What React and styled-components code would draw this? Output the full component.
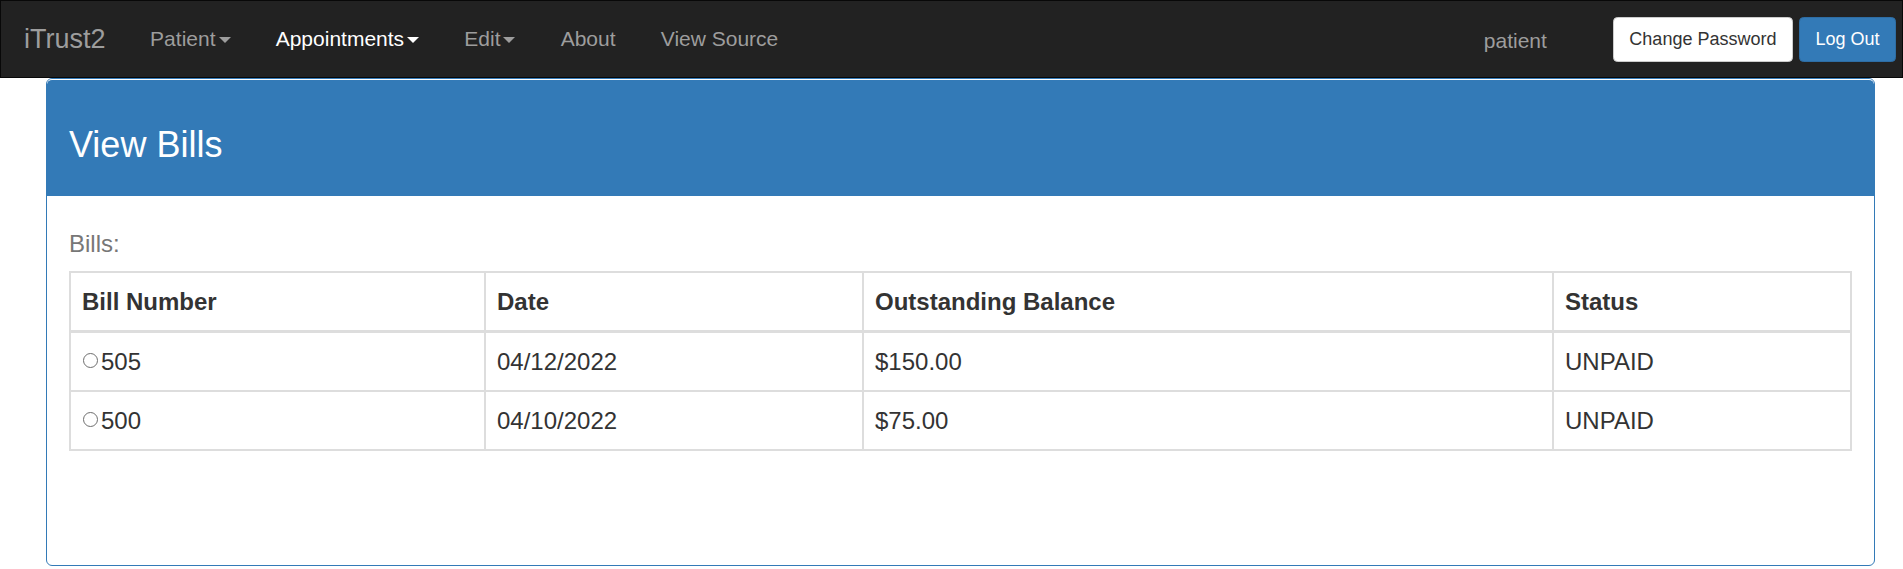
import React from "react";
import styled, { createGlobalStyle } from "styled-components";

const GlobalStyle = createGlobalStyle`
  html, body {
    margin: 0;
    padding: 0;
    background: #fff;
  }
  body {
    font-family: "Liberation Sans", Arial, Helvetica, sans-serif;
    color: #333;
  }
  *, *::before, *::after {
    box-sizing: border-box;
  }
`;

const Navbar = styled.nav`
  display: flex;
  align-items: center;
  height: 78px;
  background: #222;
  border: 1px solid #080808;
  padding-right: 6px;
`;

const Brand = styled.a`
  padding: 0 22px 0 23px;
  font-size: 27px;
  line-height: 30px;
  color: #9d9d9d;
  text-decoration: none;
  white-space: nowrap;
`;

const NavList = styled.ul`
  display: flex;
  align-items: center;
  margin: 0;
  padding: 0;
  list-style: none;
`;

const NavLink = styled.a`
  display: block;
  padding: 0 22.6px;
  font-size: 21px;
  line-height: 30px;
  color: ${(p) => (p.$active ? "#fff" : "#9d9d9d")};
  text-decoration: none;
  white-space: nowrap;
`;

const Caret = styled.span`
  display: inline-block;
  width: 0;
  height: 0;
  margin-left: 3px;
  vertical-align: middle;
  border-top: 6px solid currentColor;
  border-left: 6px solid transparent;
  border-right: 6px solid transparent;
`;

const Spacer = styled.div`
  flex: 1;
`;

const NavText = styled.span`
  align-self: flex-start;
  margin-top: 25px;
  margin-right: 66px;
  font-size: 21px;
  line-height: 30px;
  color: #9d9d9d;
`;

const ButtonGroup = styled.div`
  display: flex;
  gap: 6px;
`;

const NavButton = styled.button`
  display: inline-flex;
  align-items: center;
  height: 45px;
  padding: 0 15.5px;
  font-family: inherit;
  font-size: 18px;
  line-height: 27px;
  border-radius: 4.5px;
  border: 1px solid ${(p) => (p.$primary ? "#2e6da4" : "#ccc")};
  background: ${(p) => (p.$primary ? "#337ab7" : "#fff")};
  color: ${(p) => (p.$primary ? "#fff" : "#333")};
  cursor: pointer;
`;

const Panel = styled.section`
  margin: 0 28px 0 46px;
  border: 1px solid #337ab7;
  border-radius: 6px;
  background: #fff;
  overflow: hidden;
`;

const PanelHeading = styled.div`
  background: #337ab7;
  border-top: 1px solid #fff;
  border-radius: 5px 5px 0 0;
  padding: 45px 22px 31px;
`;

const PanelTitle = styled.h3`
  margin: 0;
  font-size: 36px;
  line-height: 40px;
  font-weight: 400;
  color: #fff;
`;

const PanelBody = styled.div`
  padding: 31px 22px 114px;
`;

const FieldLabel = styled.div`
  font-size: 24px;
  line-height: 34px;
  color: #777;
  margin-bottom: 10px;
`;

const Table = styled.table`
  width: 100%;
  table-layout: fixed;
  border-collapse: separate;
  border-spacing: 0;
  border-top: 2px solid #ddd;
  border-left: 2px solid #ddd;
  font-size: 24px;
  line-height: 34px;
  color: #333;
`;

const Th = styled.th`
  width: ${(p) => (p.$w ? `${p.$w}px` : "auto")};
  text-align: left;
  font-weight: 700;
  padding: 12px 11px 11px;
  border-right: 2px solid #ddd;
  border-bottom: 3px solid #ddd;
`;

const Td = styled.td`
  padding: 12px 11px 11px;
  border-right: 2px solid #ddd;
  border-bottom: 2px solid #ddd;
  white-space: nowrap;
`;

const Radio = styled.input`
  appearance: none;
  -webkit-appearance: none;
  display: inline-block;
  width: 15px;
  height: 15px;
  margin: 0 3px 0 1px;
  border: 1px solid #6e6e6e;
  border-radius: 50%;
  background: #fff;
  vertical-align: 2px;
`;

const navItems = [
  { label: "Patient", caret: true },
  { label: "Appointments", caret: true, active: true },
  { label: "Edit", caret: true },
  { label: "About" },
  { label: "View Source" },
];

const bills = [
  { id: "505", date: "04/12/2022", balance: "$150.00", status: "UNPAID" },
  { id: "500", date: "04/10/2022", balance: "$75.00", status: "UNPAID" },
];

export default function App() {
  return (
    <>
      <GlobalStyle />
      <Navbar>
        <Brand href="#">iTrust2</Brand>
        <NavList>
          {navItems.map((item) => (
            <li key={item.label}>
              <NavLink href="#" $active={item.active}>
                {item.label}
                {item.caret && <Caret />}
              </NavLink>
            </li>
          ))}
        </NavList>
        <Spacer />
        <NavText>patient</NavText>
        <ButtonGroup>
          <NavButton>Change Password</NavButton>
          <NavButton $primary>Log Out</NavButton>
        </ButtonGroup>
      </Navbar>
      <Panel>
        <PanelHeading>
          <PanelTitle>View Bills</PanelTitle>
        </PanelHeading>
        <PanelBody>
          <FieldLabel>Bills:</FieldLabel>
          <Table>
            <thead>
              <tr>
                <Th $w={415}>Bill Number</Th>
                <Th $w={378}>Date</Th>
                <Th $w={690}>Outstanding Balance</Th>
                <Th>Status</Th>
              </tr>
            </thead>
            <tbody>
              {bills.map((b) => (
                <tr key={b.id}>
                  <Td>
                    <Radio type="radio" name="bill" value={b.id} />
                    {b.id}
                  </Td>
                  <Td>{b.date}</Td>
                  <Td>{b.balance}</Td>
                  <Td>{b.status}</Td>
                </tr>
              ))}
            </tbody>
          </Table>
        </PanelBody>
      </Panel>
    </>
  );
}
